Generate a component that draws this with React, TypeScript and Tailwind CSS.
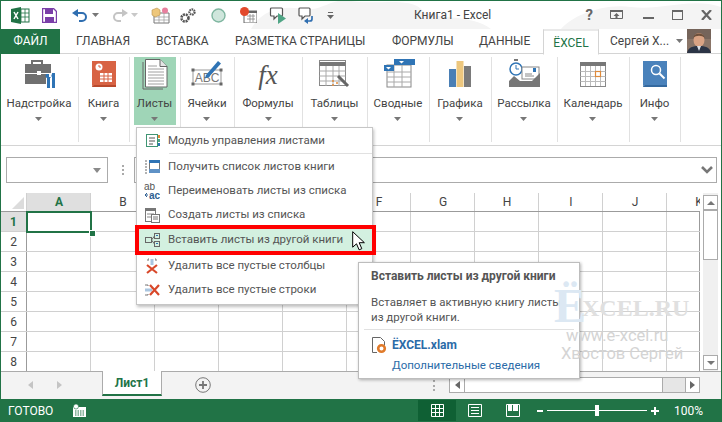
import type { ReactNode } from "react"

const font = "font-['Roboto','Open_Sans',sans-serif]"

function Caret({ className = "" }: { className?: string }) {
  return (
    <svg width="7" height="4" viewBox="0 0 7 4" className={className}>
      <path d="M0 0h7L3.5 4z" fill="#777" />
    </svg>
  )
}

function QatIcons() {
  return (
    <div className="flex items-center">
      {/* excel logo */}
      <svg width="19" height="17" viewBox="0 0 19 17" className="ml-[10px]">
        <rect x="7" y="2" width="11" height="13" fill="#fff" stroke="#217346" />
        <path d="M10 2v13M14 2v13M7 6h11M7 10h11" stroke="#217346" strokeWidth=".8" />
        <path d="M0 2l10-2v17L0 15z" fill="#217346" />
        <path d="M3 5l4 7M7 5l-4 7" stroke="#fff" strokeWidth="1.5" />
      </svg>
      {/* save */}
      <svg width="15" height="15" viewBox="0 0 15 15" className="ml-[12px]">
        <path d="M.5.5h11l3 3v11H.5z" fill="#fff" stroke="#7a3ea8" strokeWidth="1.4" />
        <rect x="3" y="1" width="8" height="5" fill="#7a3ea8" />
        <rect x="3" y="9" width="9" height="5" fill="#7a3ea8" />
      </svg>
      {/* undo */}
      <svg width="16" height="13" viewBox="0 0 16 13" className="ml-[15px]">
        <path d="M3 4h7a4 4 0 0 1 0 8H7" fill="none" stroke="#2f6eb0" strokeWidth="2" />
        <path d="M6 0v8L0 4z" fill="#2f6eb0" />
      </svg>
      <Caret className="ml-[4px]" />
      {/* redo */}
      <svg width="16" height="13" viewBox="0 0 16 13" className="ml-[13px]">
        <path d="M13 4H6a4 4 0 0 0 0 8h3" fill="none" stroke="#c4c4c4" strokeWidth="2" />
        <path d="M10 0v8l6-4z" fill="#c4c4c4" />
      </svg>
      <Caret className="ml-[3px] opacity-40" />
      {/* table with labels */}
      <svg width="19" height="17" viewBox="0 0 19 17" className="ml-[13px]">
        <path d="M3 6h15v10H3z" fill="#fff" stroke="#777" />
        <path d="M3 10h15M3 13h15M8 6v10M13 6v10" stroke="#999" strokeWidth=".7" />
        <path d="M1 3l5-2 3 2v5L4 10 1 8z" fill="#eec77b" stroke="#b8924d" strokeWidth=".6" />
        <circle cx="14" cy="3.5" r="3" fill="#e87f9e" />
      </svg>
      {/* gears */}
      <svg width="17" height="17" viewBox="0 0 17 17" className="ml-[10px]">
        <circle cx="5" cy="11" r="3.5" fill="none" stroke="#555" strokeWidth="2.6" strokeDasharray="2 .8" />
        <circle cx="12" cy="5" r="2.6" fill="none" stroke="#555" strokeWidth="2.2" strokeDasharray="1.6 .7" />
      </svg>
      {/* circle */}
      <svg width="15" height="15" viewBox="0 0 15 15" className="ml-[14px]">
        <circle cx="7.5" cy="7.5" r="6.5" fill="#cfe6dc" stroke="#7fb6a0" strokeWidth="1.4" />
      </svg>
      {/* red dot table */}
      <svg width="17" height="16" viewBox="0 0 17 16" className="ml-[14px]">
        <path d="M4 4h13v12H4z" fill="#fff" stroke="#666" />
        <path d="M4 4h13v2H4z" fill="#666" />
        <path d="M7 9h8M7 12h8M10 7v8M13 7v8" stroke="#888" strokeWidth=".8" />
        <circle cx="4.5" cy="4.5" r="4.5" fill="#e2492c" />
      </svg>
      {/* speech play */}
      <svg width="17" height="17" viewBox="0 0 17 17" className="ml-[12px]">
        <path d="M2.500 1h10a1 1 0 0 1 1 1v6a1 1 0 0 1-1 1H8l-3 3V9H2.500a1 1 0 0 1-1-1V2a1 1 0 0 1 1-1z" fill="#fff" stroke="#555" strokeWidth="1.2" />
        <path d="M9 6l8 5.500L9 17z" fill="#4fa585" />
      </svg>
      {/* speech return */}
      <svg width="16" height="17" viewBox="0 0 16 17" className="ml-[12px]">
        <path d="M2 1h9a1 1 0 0 1 1 1v6a1 1 0 0 1-1 1H7l-3 3V9H2a1 1 0 0 1-1-1V2a1 1 0 0 1 1-1z" fill="#fff" stroke="#555" strokeWidth="1.2" />
        <path d="M14 9v3a2 2 0 0 1-2 2H9" fill="none" stroke="#2f6eb0" strokeWidth="1.7" />
        <path d="M10 11v6l-4-3z" fill="#2f6eb0" />
      </svg>
      <svg width="7" height="7" viewBox="0 0 7 7" className="ml-[13px]">
        <path d="M1 0h5v1H1z" fill="#666" />
        <path d="M0 3h7L3.500 7z" fill="#666" />
      </svg>
    </div>
  )
}

function TitleBar() {
  return (
    <div className="relative h-[28px] flex items-center shrink-0 overflow-hidden">
      {/* faint cloud texture behind the title */}
      <svg width="720" height="28" viewBox="0 0 720 28" className="absolute left-0 top-0">
        <path d="M250 28c10-18 30-24 50-20s30-12 50-8 60-4 70 8 50 4 70 20zM560 28c10-12 40-26 70-22s60-10 90 0v22z" fill="#f4f4f4" />
      </svg>
      <div className="relative flex-1 flex items-center">
        <QatIcons />
        <span className="absolute left-[413px] text-[12px] text-[#444]">Книга1 - Excel</span>
      </div>
      <div className="relative flex items-center mr-[9px]">
        <span className="text-[15px] font-bold text-[#666] leading-none">?</span>
        <svg width="14" height="10" viewBox="0 0 14 10" className="ml-[17px]">
          <path d="M.5.500h12v8H.5z" fill="none" stroke="#666" />
          <path d="M0 0h13v2H0zM6.500 3l3 3h-2v3h-2V6h-2z" fill="#666" />
        </svg>
        <div className="ml-[19px] w-[11px] h-[2px] mt-[6px] bg-[#666]" />
        <div className="ml-[18px] w-[11px] h-[10px] border border-[#666] border-t-[2px]" />
        <svg width="11" height="10" viewBox="0 0 11 10" className="ml-[18px]">
          <path d="M1 0l9 10M10 0L1 10" stroke="#666" strokeWidth="2.200" />
        </svg>
      </div>
    </div>
  )
}

function Avatar() {
  return (
    <svg width="24" height="24" viewBox="0 0 24 24" className="absolute left-[686px] top-0">
      <rect width="24" height="24" fill="#8a7568" />
      <path d="M0 0h24v10H0z" fill="#75645a" />
      <ellipse cx="12" cy="11" rx="5.500" ry="7" fill="#d9a384" />
      <path d="M6.500 9c0-6 11-6 11 0-2-3-9-3-11 0z" fill="#6d4f3a" />
      <path d="M0 24c1-6 6-7 12-7s11 1 12 7z" fill="#2b3445" />
      <path d="M10 17h4l-2 5z" fill="#dfe3ea" />
    </svg>
  )
}

function Tabs() {
  return (
    <div className="relative h-[25px] shrink-0 flex items-center text-[12px] text-[#444] border-b border-[#d4d4d4]">
      <div className="w-[59px] h-[25px] bg-[#217346] text-white flex items-center justify-center">ФАЙЛ</div>
      <span className="ml-[16px] w-[53px] text-center">ГЛАВНАЯ</span>
      <span className="ml-[27px] w-[52px] text-center">ВСТАВКА</span>
      <span className="ml-[27px] w-[130px] text-center whitespace-nowrap">РАЗМЕТКА СТРАНИЦЫ</span>
      <span className="ml-[27px] w-[60px] text-center">ФОРМУЛЫ</span>
      <span className="ml-[27px] w-[49px] text-center">ДАННЫЕ</span>
      <div className="ml-[15px] w-[56px] h-[25px] bg-white border border-b-0 border-[#d4d4d4] text-[#217346] flex items-center justify-center z-10 translate-y-[0.500px]">ЁXCEL</div>
      <span className="ml-[11px] w-[58px] whitespace-nowrap">Сергей Х...</span>
      <Caret className="ml-[8px]" />
      <Avatar />
    </div>
  )
}

type RibbonItem = { label: string; width: number; icon: ReactNode; active?: boolean }

const ribbonItems: RibbonItem[] = [
  {
    label: "Надстройка",
    width: 78,
    icon: (
      <>
        <path d="M11 6V3h10v3" fill="none" stroke="#707070" strokeWidth="2" />
        <path d="M4 6h26v9H4z" fill="#707070" />
        <path d="M4 16h21v10H4z" fill="#707070" />
        <rect x="16" y="13" width="4" height="4" fill="#fff" />
        <path d="M25 16c-1 2 0 4 1 4v10h3V20c2-1 2-3 1-4v3h-2v-3zM31 15h3v15h-3z" fill="#2f74b5" />
      </>
    ),
  },
  {
    label: "Книга",
    width: 51,
    icon: (
      <>
        <path d="M6 3h24v24H8a2 2 0 0 0-2 2z" fill="#d86344" />
        <path d="M6 29a2 2 0 0 1 2-2h22v2z" fill="#b9492c" />
        <g fill="#fff">
          <rect x="14" y="15" width="12" height="9" />
          <circle cx="13" cy="9" r="3.500" />
        </g>
        <path d="M14 18h12M14 21h12M18 15v9M22 15v9" stroke="#d86344" />
        <path d="M13 7v2h2" stroke="#d86344" fill="none" />
      </>
    ),
  },
  {
    label: "Листы",
    width: 51,
    active: true,
    icon: (
      <>
        <path d="M6 4v27h20" fill="none" stroke="#666" />
        <path d="M8.500 1.500H23l7 7V29H8.500z" fill="#fff" stroke="#666" />
        <path d="M23 1.500v7h7" fill="#e5e5e5" stroke="#666" />
        <path d="M11 11h16M11 14h16M11 17h16M11 20h16M11 23h16M11 26h16M11 8h9" stroke="#888" strokeWidth=".8" />
      </>
    ),
  },
  {
    label: "Ячейки",
    width: 54,
    icon: (
      <>
        <rect x="4" y="12" width="28" height="14" fill="none" stroke="#999" />
        <g fill="#666">
          <rect x="2.500" y="10.500" width="3" height="3" />
          <rect x="30.500" y="10.500" width="3" height="3" />
          <rect x="2.500" y="24.500" width="3" height="3" />
          <rect x="30.500" y="24.500" width="3" height="3" />
        </g>
        <text x="18" y="24" textAnchor="middle" fontSize="12" fontFamily="Liberation Sans" fill="#777">ABC</text>
        <path d="M17 17L29 3l3 2.500L20 19l-4 1.500z" fill="#2f74b5" />
      </>
    ),
  },
  {
    label: "Формулы",
    width: 68,
    icon: (
      <text x="18" y="26" textAnchor="middle" fontSize="27" fontStyle="italic" fontFamily="Liberation Serif" fill="#555">fx</text>
    ),
  },
  {
    label: "Таблицы",
    width: 65,
    icon: (
      <>
        <rect x="3.500" y="2.500" width="26" height="25" fill="#fff" stroke="#888" />
        <rect x="3.500" y="4" width="26" height="4" fill="#777" />
        <path d="M3.500 13h26M3.500 18h26M3.500 23h26M10 8v20M17 8v20M23 8v20" stroke="#aaa" />
        <path d="M22 18l10 10" stroke="#666" strokeWidth="3" />
        <circle cx="17" cy="23" r="1" fill="#e08a3a" />
        <circle cx="21" cy="25" r="1" fill="#e08a3a" />
        <circle cx="17" cy="27" r="1" fill="#e08a3a" />
      </>
    ),
  },
  {
    label: "Сводные",
    width: 62,
    icon: (
      <>
        <rect x="7" y="7" width="24" height="22" fill="#fff" stroke="#888" />
        <path d="M7 14h24M7 19h24M7 24h24M14 7v22M22 7v22" stroke="#aaa" />
        <rect x="14" y="1" width="21" height="6" fill="#2f74b5" />
        <rect x="4" y="7" width="10" height="6" fill="#2f74b5" />
        <path d="M19 3h5l-2.500 2.500zM6 9h5l-2.500 2.500z" fill="#fff" />
      </>
    ),
  },
  {
    label: "Графика",
    width: 62,
    icon: (
      <>
        <rect x="7" y="11" width="7" height="18" fill="#4a7fb5" />
        <rect x="14.500" y="3" width="7" height="26" fill="#edc77e" />
        <rect x="22" y="8" width="7" height="21" fill="#7a7a7a" />
      </>
    ),
  },
  {
    label: "Рассылка",
    width: 66,
    icon: (
      <>
        <circle cx="10" cy="11" r="6" fill="#fff" stroke="#2f74b5" strokeWidth="1.500" />
        <path d="M10 7v4h3" fill="none" stroke="#2f74b5" />
        <rect x="8" y="1" width="4" height="2" fill="#777" />
        <rect x="16" y="9" width="17" height="12" fill="#fff" stroke="#888" />
        <rect x="27" y="10" width="3" height="4" fill="#2f74b5" />
        <path d="M19 16h7M19 18h9" stroke="#888" />
        <path d="M3 23l5-5 6 5h12l8-8v14H3z" fill="#777" />
      </>
    ),
  },
  {
    label: "Календарь",
    width: 72,
    icon: (
      <>
        <rect x="5.500" y="4.500" width="25" height="24" fill="#fff" stroke="#888" />
        <rect x="5" y="4" width="26" height="4" fill="#777" />
        <path d="M5.500 13.500h25M5.500 18.500h25M5.500 23.500h25M10.500 8v20M15.500 8v20M20.500 8v20M25.500 8v20" stroke="#bbb" />
        <rect x="20.500" y="13.500" width="5" height="5" fill="#fff" stroke="#e08a3a" strokeWidth="1.200" />
      </>
    ),
  },
  {
    label: "Инфо",
    width: 51,
    icon: (
      <>
        <path d="M6 3h24v24H8a2 2 0 0 0-2 2z" fill="#4a82bb" />
        <path d="M6 29a2 2 0 0 1 2-2h22v2z" fill="#34699f" />
        <circle cx="19" cy="12" r="4.500" fill="none" stroke="#fff" strokeWidth="1.500" />
        <path d="M22.500 15.500l5 5" stroke="#fff" strokeWidth="2" />
      </>
    ),
  },
]

function Ribbon() {
  return (
    <div className="h-[92px] shrink-0 flex items-start border-b border-[#d4d4d4] pt-[3px] relative">
      {ribbonItems.map((item) => (
        <div
          key={item.label}
          style={{ width: item.width }}
          className="h-[85px] shrink-0 border-r border-[#e1e1e1] flex justify-center pr-[1px]"
        >
          <div className={`h-[68px] flex flex-col items-center ${item.active ? "w-[42px] bg-[#9fd5b7]" : ""}`}>
            <svg width="36" height="32" viewBox="0 0 36 32" className="shrink-0 mt-[1px] max-w-none">
              {item.icon}
            </svg>
            <span className="text-[11.500px] text-[#444] leading-[16px] mt-[5px] whitespace-nowrap">{item.label}</span>
            <Caret className="mt-[6px]" />
          </div>
        </div>
      ))}
    </div>
  )
}

function FormulaBar() {
  return (
    <div className="h-[47px] shrink-0 flex items-start pt-[11px] pl-[5px] pr-[4px]">
      <div className="w-[102px] h-[26px] border border-[#ababab] flex items-center justify-end pr-[6px]">
        <svg width="8" height="5" viewBox="0 0 8 5"><path d="M0 0h8L4 5z" fill="#8a8a8a" /></svg>
      </div>
      <div className="w-[2px] h-[10px] mt-[8px] ml-[14px] border-l-2 border-dotted border-[#aaa]" />
      <div className="ml-[10px] flex-1 h-[26px] border border-[#ababab] flex items-center justify-end pr-[3px]">
        <svg width="12" height="8" viewBox="0 0 12 8"><path d="M1 1l5 5 5-5" fill="none" stroke="#777" strokeWidth="2.600" /></svg>
      </div>
    </div>
  )
}

const columns = ["A", "B", "C", "D", "E", "F", "G", "H", "I", "J", "K"]
// these sit under the open menu, so their letters never show
const coveredColumns = ["C", "D", "E"]
const rows = [1, 2, 3, 4, 5, 6, 7, 8]

function SheetGrid() {
  return (
    <div className="w-[699px] h-[178px] shrink-0 overflow-hidden relative text-[12px] text-[#444]">
      <div className="flex h-[19px] border-b border-[#9b9b9b]">
        <div className="w-[26px] shrink-0 border-r border-[#d0d0d0] flex items-end justify-end p-[2px]">
          <svg width="12" height="12" viewBox="0 0 12 12"><path d="M12 0v12H0z" fill="#dcdcdc" /></svg>
        </div>
        {columns.map((c) => (
          <div
            key={c}
            className={`shrink-0 border-r border-[#d0d0d0] overflow-hidden ${c === "K" ? "w-[33px] border-r-0" : "w-[64px]"} ${c === "A" ? "bg-[#dfdfdf] font-bold text-[#217346]" : ""}`}
          >
            <div className="w-[64px] h-[18px] flex items-center justify-center">
              {coveredColumns.includes(c) ? null : c}
            </div>
          </div>
        ))}
      </div>
      {rows.map((r) => (
        <div key={r} className="flex h-[20px] border-b border-[#d0d0d0]">
          <div className={`w-[26px] shrink-0 border-r border-[#9b9b9b] flex items-center justify-center ${r === 1 ? "bg-[#dfdfdf] font-bold text-[#217346]" : ""}`}>
            {r}
          </div>
          {columns.map((c) => (
            <div key={c} className={`shrink-0 border-r ${c === "K" ? "w-[33px] border-[#9b9b9b]" : "w-[64px] border-[#d0d0d0]"}`} />
          ))}
        </div>
      ))}
      {/* selected cell A1 */}
      <div className="absolute left-[25px] top-[18px] w-[66px] h-[22px] border-2 border-[#217346]" />
      <div className="absolute left-[88px] top-[37px] w-[5px] h-[5px] bg-[#217346] border border-white box-content" />
    </div>
  )
}

function VScroll() {
  return (
    <div className="ml-[3px] w-[15px] h-[178px] flex flex-col pt-[2px] bg-[#f0f0f0]">
      <div className="h-[15px] border border-[#ababab] bg-white flex items-center justify-center">
        <svg width="8" height="4" viewBox="0 0 8 4"><path d="M4 0l4 4H0z" fill="#777" /></svg>
      </div>
      <div className="h-[50px] border border-[#ababab] bg-white" />
      <div className="flex-1" />
      <div className="h-[15px] border border-[#ababab] bg-white flex items-center justify-center mb-[1px]">
        <svg width="8" height="4" viewBox="0 0 8 4"><path d="M0 0h8L4 4z" fill="#777" /></svg>
      </div>
    </div>
  )
}

function TabStrip() {
  return (
    <div className="h-[28px] shrink-0 bg-[#f3f3f3] flex items-start border-t border-[#ababab]">
      <svg width="5" height="8" viewBox="0 0 5 8" className="ml-[27px] mt-[9px]"><path d="M5 0v8L0 4z" fill="#c4c4c4" /></svg>
      <svg width="5" height="8" viewBox="0 0 5 8" className="ml-[24px] mt-[9px]"><path d="M0 0v8l5-4z" fill="#c4c4c4" /></svg>
      <div className="ml-[40px] w-[60px] h-[25px] bg-white border-x border-[#ababab] border-b-[2px] border-b-[#217346] flex items-center justify-center text-[12px] font-bold text-[#217346] -mt-[1px]">
        Лист1
      </div>
      <svg width="16" height="16" viewBox="0 0 16 16" className="ml-[33px] mt-[5px]">
        <circle cx="8" cy="8" r="7.300" fill="none" stroke="#777" />
        <path d="M8 4v8M4 8h8" stroke="#777" strokeWidth="1.800" />
      </svg>
      <div className="ml-[222px] mt-[8px] h-[11px] w-[2px] border-l-2 border-dotted border-[#aaa]" />
      <div className="ml-[14px] mt-[5px] w-[251px] h-[16px] border border-[#ababab] flex">
        <div className="w-[15px] border-r border-[#ababab] bg-white flex items-center justify-center">
          <svg width="5" height="8" viewBox="0 0 5 8"><path d="M5 0v8L0 4z" fill="#666" /></svg>
        </div>
        <div className="w-[198px] bg-white border-r border-[#ababab]" />
        <div className="flex-1 bg-[#e6e6e6]" />
        <div className="w-[14px] border-l border-[#ababab] bg-white flex items-center justify-center">
          <svg width="5" height="8" viewBox="0 0 5 8"><path d="M0 0v8l5-4z" fill="#666" /></svg>
        </div>
      </div>
    </div>
  )
}

function StatusBar() {
  return (
    <div className="h-[23px] shrink-0 bg-[#217346] flex items-center text-white text-[12px]">
      <span className="ml-[7px] w-[44px]">ГОТОВО</span>
      <svg width="13" height="13" viewBox="0 0 13 13" className="ml-[21px]">
        <path d="M0 3h13v10H0z" fill="#fff" />
        <circle cx="3" cy="2.500" r="2.500" fill="#fff" stroke="#217346" strokeWidth=".6" />
        <path d="M2 7h9M2 9h9M2 11h9" stroke="#217346" strokeDasharray="1.500 1" />
      </svg>
      <div className="ml-[332px] w-[38px] h-[21px] bg-[#0f6034] flex items-center justify-center">
        <svg width="13" height="13" viewBox="0 0 13 13">
          <path d="M.5.500h12v12H.5zM4.500.500v12M8.500.500v12M.5 4.500h12M.5 8.500h12" fill="none" stroke="#fff" />
        </svg>
      </div>
      <svg width="14" height="13" viewBox="0 0 14 13" className="ml-[12px]">
        <path d="M.5.500h13v12H.5z" fill="none" stroke="#fff" />
        <path d="M3 3.500h8M3 6.500h8M3 9.500h8" stroke="#fff" />
      </svg>
      <svg width="14" height="13" viewBox="0 0 14 13" className="ml-[24px]">
        <path d="M.5.500h13v12H.5z" fill="none" stroke="#fff" />
        <path d="M2 1h4v6H2zM7 1h5v6H7z" fill="#fff" />
      </svg>
      <div className="ml-[17px] w-[6px] h-[2px] bg-white" />
      <div className="ml-[4px] w-[100px] h-[1px] bg-white relative">
        <div className="absolute left-[48px] -top-[5px] w-[4px] h-[11px] bg-white" />
      </div>
      <svg width="8" height="8" viewBox="0 0 8 8" className="ml-[4px]">
        <path d="M3 0h2v3h3v2H5v3H3V5H0V3h3z" fill="#fff" />
      </svg>
      <span className="ml-[15px] text-[12px] leading-none">100%</span>
    </div>
  )
}

type MenuEntry = { label: string; icon: ReactNode; active?: boolean; separator?: boolean }

const menuEntries: MenuEntry[] = [
  {
    label: "Модуль управления листами",
    separator: true,
    icon: (
      <>
        <rect x="2.500" y="1.500" width="11" height="12" fill="#fff" stroke="#3f9573" />
        <path d="M5 5h6M5 8h6M5 11h4" stroke="#555" />
        <path d="M14 2h2v3h-2z" fill="#e08a3a" />
        <path d="M14 6h2v3h-2z" fill="#4fa585" />
        <path d="M14 10h2v3h-2z" fill="#2f74b5" />
      </>
    ),
  },
  {
    label: "Получить список листов книги",
    icon: (
      <>
        <rect x="5.500" y="1.500" width="10" height="12" fill="#fff" stroke="#777" />
        <rect x="5" y="1" width="11" height="3" fill="#2f74b5" />
        <rect x="5" y="10" width="11" height="4" fill="#5f92c6" />
        <path d="M1 2h2M1 5h2M1 8h2M1 11h2M1 14h2" stroke="#666" />
      </>
    ),
  },
  {
    label: "Переименовать листы из списка",
    icon: (
      <>
        <text x="0" y="7" fontSize="10" fontFamily="Liberation Sans" fill="#555">ab</text>
        <text x="5" y="16" fontSize="10" fontWeight="bold" fontFamily="Liberation Sans" fill="#2f5f92">ac</text>
        <path d="M1 12h3M1 12l2-2M1 12l2 2" stroke="#2f5f92" fill="none" />
      </>
    ),
  },
  {
    label: "Создать листы из списка",
    icon: (
      <>
        <rect x="1.500" y="1.500" width="10" height="13" fill="#fff" stroke="#777" />
        <rect x="1" y="1" width="11" height="3" fill="#777" />
        <path d="M3 7h7M3 10h4" stroke="#888" />
        <rect x="7.500" y="7.500" width="8" height="8" fill="#fff" stroke="#777" />
        <path d="M9 10h5M9 12h5" stroke="#777" />
      </>
    ),
  },
  {
    label: "Вставить листы из другой книги",
    active: true,
    icon: (
      <>
        <rect x="1.500" y="5.500" width="6" height="5" fill="none" stroke="#666" />
        <rect x="10.500" y="1.500" width="5" height="5" fill="none" stroke="#666" />
        <rect x="10.500" y="9.500" width="5" height="5" fill="none" stroke="#666" />
        <path d="M7.500 8l3-4M7.500 8l3 4" stroke="#666" />
        <path d="M12 3.500h2M12 11.500h2" stroke="#2f74b5" />
      </>
    ),
  },
  {
    label: "Удалить все пустые столбцы",
    icon: (
      <>
        <path d="M4 1v2M12 1v2M4 1h1M11 1h1" stroke="#777" />
        <rect x="6.500" y="1" width="3" height="6" fill="#a9c5e0" />
        <path d="M3 7l10 8M13 7L3 15" stroke="#d8482a" strokeWidth="2.200" />
      </>
    ),
  },
  {
    label: "Удалить все пустые строки",
    icon: (
      <>
        <path d="M1 3h3M1 13h3M4 3v1M4 12v1" stroke="#777" />
        <rect x="1" y="6.500" width="7" height="3" fill="#a9c5e0" />
        <path d="M6 3l9 10M15 3L6 13" stroke="#d8482a" strokeWidth="2.200" />
      </>
    ),
  },
]

function DropMenu() {
  return (
    <div className="absolute left-[135px] top-[126px] w-[237px] h-[178px] bg-white border border-[#c6c6c6] shadow-[1px_2px_3px_rgba(0,0,0,0.25)] pt-[1px] text-[11.500px] text-[#555] z-20">
      {menuEntries.map((e) => (
        <div key={e.label} className={e.separator ? "h-[26px]" : e.active ? "h-[26px] mt-[1px]" : "h-[24px]"}>
          <div className={`relative h-[24px] flex items-center ${e.active ? "bg-[#d3f0e0]" : ""}`}>
            {e.active && <div className="absolute -left-[2px] -right-[4px] -top-[3px] -bottom-[3px] border-[4px] border-[#f00]" />}
            <svg width="16" height="16" viewBox="0 0 16 16" className="ml-[7px] shrink-0">{e.icon}</svg>
            <span className="ml-[8px] whitespace-nowrap">{e.label}</span>
          </div>
          {e.separator && <div className="ml-[32px] h-px bg-[#e1e1e1]" />}
        </div>
      ))}
    </div>
  )
}

function Tooltip() {
  return (
    <div className="absolute left-[357px] top-[261px] w-[222px] h-[117px] bg-white border border-[#bdbdbd] shadow-[1px_1px_3px_rgba(0,0,0,0.3)] px-[12px] pt-[5px] text-[11.500px] text-[#555] z-20">
      <div className="font-bold leading-[16px] text-[12px] whitespace-nowrap">Вставить листы из другой книги</div>
      <div className="mt-[11px] leading-[15px] whitespace-nowrap">Вставляет в активную книгу листы<br />из другой книги.</div>
      <div className="-mx-[7px] mt-[4px] h-px bg-[#e1e1e1]" />
      <div className="flex items-center mt-[6px]">
        <svg width="16" height="17" viewBox="0 0 16 17" className="shrink-0">
          <path d="M1.500.500h8l4 4v4M1.500.500v15H6" fill="none" stroke="#666" />
          <circle cx="10.500" cy="11.500" r="3.300" fill="none" stroke="#e07a2a" strokeWidth="2.600" />
        </svg>
        <span className="ml-[5px] font-bold text-[12px] text-[#2b6ba8]">ЁXCEL.xlam</span>
      </div>
      <div className="ml-[21px] mt-[3px] text-[#2b6ba8] whitespace-nowrap">Дополнительные сведения</div>
    </div>
  )
}

function Watermark() {
  return (
    <div className="absolute left-[553px] top-[281px] w-[140px] h-[85px] z-30 pointer-events-none">
      <span className="absolute left-0 top-0 text-[48px] leading-[48px] font-bold text-[#dce8f3] font-['Liberation_Serif',serif]">Ё</span>
      <span className="absolute left-[28px] top-[12px] text-[24px] leading-[28px] font-bold text-[#e0e0e0] font-['Liberation_Serif',serif] whitespace-nowrap">XCEL.RU</span>
      <span className="absolute left-[12px] top-[45px] text-[16.500px] leading-[18px] text-[#d4d4d4] whitespace-nowrap">www.e-xcel.ru</span>
      <span className="absolute left-[7px] top-[63px] text-[16.500px] leading-[18px] text-[#d4d4d4] whitespace-nowrap">Хвостов Сергей</span>
    </div>
  )
}

function Cursor() {
  return (
    <svg width="13" height="20" viewBox="0 0 13 20" className="absolute left-[351px] top-[230px] z-30">
      <path d="M.7.7v15.500l3.800-3.400 2.600 6 2.700-1.100-2.600-6h5.200z" fill="#fff" stroke="#000" strokeWidth="1" />
    </svg>
  )
}

export default function App() {
  return (
    <div className={`relative w-[722px] h-[422px] overflow-hidden bg-white border-x border-t border-[#217346] flex flex-col ${font}`}>
      <TitleBar />
      <Tabs />
      <Ribbon />
      <FormulaBar />
      <div className="flex shrink-0">
        <SheetGrid />
        <VScroll />
      </div>
      <TabStrip />
      <StatusBar />
      <DropMenu />
      <Tooltip />
      <Watermark />
      <Cursor />
    </div>
  )
}
